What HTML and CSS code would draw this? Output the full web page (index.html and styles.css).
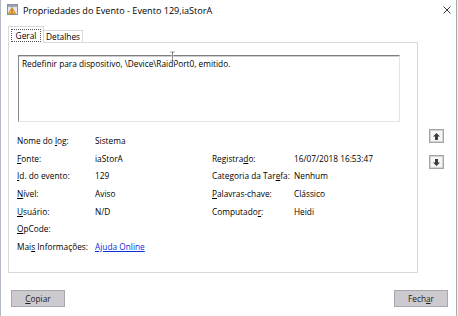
FILE: index.html
```html
<!DOCTYPE html>
<html lang="pt-BR">
<head>
    <meta charset="UTF-8">
    <title>Propriedades do Evento</title>
    <link rel="stylesheet" href="styles.css">
</head>
<body>
    <div class="window">
        <div class="titlebar">
            <svg class="app-icon" width="11" height="11" viewBox="0 0 11 11">
                <rect x="0.5" y="0.5" width="10" height="10" fill="#e4e8ee" stroke="#8790a0"/>
                <rect x="1" y="1" width="9" height="2" fill="#9aa6b8"/>
                <path d="M5 3.5 L8.5 9.5 H1.5 Z" fill="#f2c230" stroke="#c7801a" stroke-width="0.8"/>
                <rect x="4.6" y="5.3" width="0.9" height="2.2" fill="#b02020"/>
                <rect x="4.6" y="8" width="0.9" height="0.9" fill="#b02020"/>
            </svg>
            <span class="title">Propriedades do Evento - Evento 129,iaStorA</span>
            <svg class="close" width="8" height="8" viewBox="0 0 8 8">
                <path d="M0.5 0.5 L7.5 7.5 M7.5 0.5 L0.5 7.5" stroke="#222" stroke-width="0.9"/>
            </svg>
        </div>

        <div class="content">
            <div class="main">
                <div class="tabs">
                    <span class="tab tab-active"><span class="focus">Geral</span></span>
                    <span class="tab">Detalhes</span>
                </div>
                <div class="panel">
                    <div class="description">Redefinir para dispositivo, \Device\RaidPort0, emitido.</div>
                    <div class="fields">
                        <span>Nome do <u>l</u>og:</span><span>Sistema</span><span></span><span></span>
                        <span><u>F</u>onte:</span><span>iaStorA</span><span>Registra<u>d</u>o:</span><span>16/07/2018 16:53:47</span>
                        <span><u>I</u>d. do evento:</span><span>129</span><span>Categoria da Tar<u>e</u>fa:</span><span>Nenhum</span>
                        <span><u>N</u>ível:</span><span>Aviso</span><span><u>P</u>alavras-chave:</span><span>Clássico</span>
                        <span><u>U</u>suário:</span><span>N/D</span><span>Computado<u>r</u>:</span><span>Heidi</span>
                        <span><u>O</u>pCode:</span><span></span><span></span><span></span>
                        <span>Mai<u>s</u> Informações:</span><span><a href="#" class="link">Ajuda Online</a></span><span></span><span></span>
                    </div>
                </div>
            </div>
            <div class="side">
                <span class="nav-btn">
                    <svg width="7" height="7" viewBox="0 0 7 7"><path d="M3.5 0 L7 3.5 H5 V7 H2 V3.5 H0 Z" fill="#3c3c3c"/></svg>
                </span>
                <span class="nav-btn">
                    <svg width="7" height="7" viewBox="0 0 7 7"><path d="M3.5 7 L7 3.5 H5 V0 H2 V3.5 H0 Z" fill="#3c3c3c"/></svg>
                </span>
            </div>
        </div>

        <div class="actions">
            <span class="button"><u>C</u>opiar</span>
            <span class="button">Fech<u>a</u>r</span>
        </div>

        <svg class="cursor" width="7" height="11" viewBox="0 0 7 11">
            <path d="M1 0.5 H3 L3.5 1 L4 0.5 H6 V1.5 H4 V9.5 H6 V10.5 H4 L3.5 10 L3 10.5 H1 V9.5 H3 V1.5 H1 Z" fill="#111" stroke="#fff" stroke-width="0.6"/>
        </svg>
    </div>
</body>
</html>
```

FILE: styles.css
```css
*{
    box-sizing: border-box;
}
html, body{
    margin: 0;
    padding: 0;
}
body{
    width: 458px;
    height: 316px;
    overflow: hidden;
    background: #fff;
    font-family: "Open Sans", "Noto Sans", sans-serif;
    font-size: 8.3px;
    color: #000;
}
.window{
    position: relative;
    width: 458px;
    height: 316px;
    background: #fff;
    box-shadow: inset 1px 0 0 #b3b9c4, inset -1px 0 0 #f2f2f2, inset -2px 0 0 #a9a9a9;
}
u{
    text-decoration-thickness: 1px;
    text-underline-offset: 1px;
}

/* title */
.titlebar{
    display: flex;
    align-items: center;
    height: 20px;
    padding: 0 0 0 7px;
}
.app-icon{
    margin-top: -1px;
    margin-right: 5px;
}
.title{
    font-size: 9.1px;
}
.close{
    margin-left: auto;
    margin-right: 7px;
}

/* tabs + panel */
.content{
    display: flex;
    margin-top: 6px;
}
.main{
    margin-left: 8px;
    width: 410px;
}
.tabs{
    display: flex;
    align-items: flex-end;
    height: 16px;
}
.tab{
    display: flex;
    align-items: center;
    justify-content: center;
    height: 12px;
    padding: 0 3px;
    border: 1px solid #d9d9d9;
    border-bottom: none;
    background: #fff;
}
.tab-active{
    position: relative;
    z-index: 1;
    height: 17px;
    width: 36px;
    margin-bottom: -1px;
    padding: 2px 2px 1px;
}
.tab-active + .tab{
    margin-left: -1px;
    width: 40px;
}
.focus{
    display: flex;
    align-items: center;
    justify-content: center;
    width: 100%;
    height: 100%;
    border: 1px dotted #555;
}
.panel{
    height: 231px;
    border: 1px solid #d9d9d9;
    padding: 12px 0 0 9px;
}
.description{
    width: 382px;
    height: 67px;
    padding: 1px 3px;
    line-height: 14px;
    border: 1px solid #e3e3e3;
    border-top-color: #7e7e7e;
    border-left-color: #8a8a8a;
    box-shadow: inset 0 1px 0 #cfcfcf;
}
.fields{
    display: grid;
    grid-template-columns: 78px 117px 82px auto;
    grid-auto-rows: 17.6px;
    align-items: center;
    margin: 10px 0 0 -1px;
}
.link{
    color: #0a2de0;
    text-decoration: underline;
}

/* side arrows */
.side{
    display: flex;
    flex-direction: column;
    gap: 12px;
    margin: 103px 0 0 11px;
}
.nav-btn{
    display: flex;
    align-items: center;
    justify-content: center;
    width: 15px;
    height: 14px;
    border: 1px solid #a4a4a4;
    box-shadow: inset 0 0 0 1px #d2d2d2;
    background: #f6f6f6;
}

/* bottom buttons */
.actions{
    display: flex;
    justify-content: space-between;
    margin-top: 17px;
    padding: 0 10px 0 11px;
}
.button{
    display: flex;
    align-items: center;
    justify-content: center;
    width: 54px;
    height: 17px;
    border: 1px solid #a9a6ad;
    background: #ccc9cf;
    color: #222;
}

.cursor{
    position: absolute;
    left: 169px;
    top: 51px;
}
```
